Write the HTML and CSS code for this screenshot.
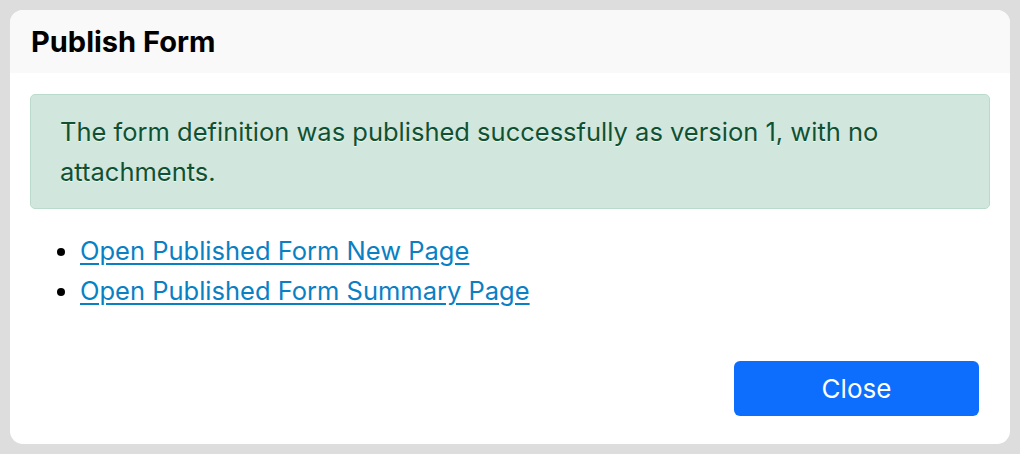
FILE: index.html
```html
<!DOCTYPE html>
<html>
<head>
<meta charset="utf-8">
<link rel="stylesheet" href="styles.css">
</head>
<body>
<div class="modal">
  <div class="modal-header">
    <h1 class="modal-title">Publish Form</h1>
  </div>
  <div class="modal-body">
    <div class="alert">The form definition was published successfully as version 1, with no attachments.</div>
    <ul class="links">
      <li><a href="#">Open Published Form New Page</a></li>
      <li><a href="#">Open Published Form Summary Page</a></li>
    </ul>
  </div>
  <div class="modal-footer">
    <button class="btn">Close</button>
  </div>
</div>
</body>
</html>
```
FILE: styles.css
```css
html, body {
  margin: 0;
  padding: 0;
}
body {
  background: #dddddd;
  font-family: Inter, "Liberation Sans", sans-serif;
  padding: 10px;
  box-sizing: border-box;
  height: 454px;
}
.modal {
  background: #ffffff;
  border-radius: 13px;
  height: 434px;
  display: flex;
  flex-direction: column;
  overflow: hidden;
}
.modal-header {
  background: #f9f9f9;
  height: 63px;
  display: flex;
  align-items: center;
  padding: 0 21px;
}
.modal-title {
  margin: 0;
  font-size: 29px;
  font-weight: 700;
  color: #000;
}
.modal-body {
  padding: 21px 20px 0 20px;
}
.alert {
  background: #d1e7dd;
  border: 1px solid #badbcc;
  border-radius: 5px;
  color: #0f5132;
  font-size: 25.5px;
  line-height: 40px;
  padding: 17px 29px 16px 29px;
  text-shadow: 0 1px 0 rgba(255, 255, 255, 0.6);
}
.links {
  margin: 22px 0 0 0;
  padding-left: 50px;
  font-size: 25.5px;
  line-height: 40px;
}
.links a {
  color: #0a80c4;
  text-decoration: underline;
  text-underline-offset: 3px;
}
.modal-footer {
  margin-top: auto;
  display: flex;
  justify-content: flex-end;
  padding: 0 31px 28px 0;
}
.btn {
  background: #0d6efd;
  color: #ffffff;
  border: none;
  border-radius: 6px;
  width: 245px;
  height: 55px;
  font-family: Inter, "Liberation Sans", sans-serif;
  font-size: 26px;
  cursor: pointer;
}
```
